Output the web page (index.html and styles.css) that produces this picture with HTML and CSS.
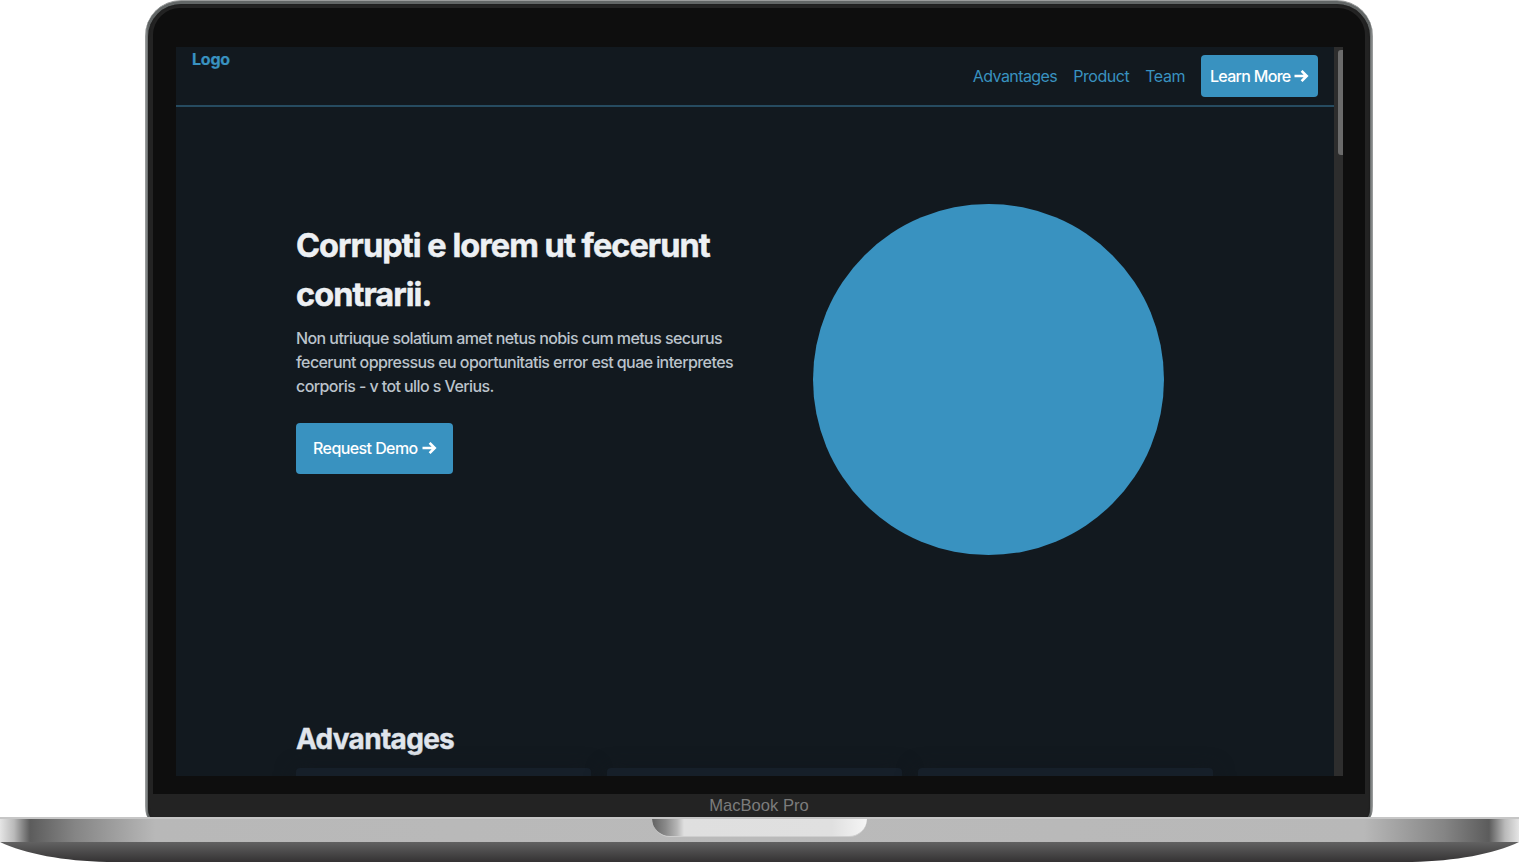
FILE: index.html
```
<!DOCTYPE html>
<html lang="en">
<head>
<meta charset="utf-8">
<title>MacBook Pro</title>
<link rel="stylesheet" href="styles.css">
</head>
<body>
<div class="laptop">
  <div class="lid">
    <div class="shell">
      <div class="bezel">
        <div class="screen">
          <div class="page">
            <header class="header">
              <a class="logo">Logo</a>
              <nav class="nav">
                <a class="link-advantages">Advantages</a>
                <a class="link-product">Product</a>
                <a class="link-team">Team</a>
                <a class="button button-small"><span>Learn More</span><svg class="arrow" viewBox="0 0 15 12"><path d="M0.5 6H12M7.6 0.9L12.7 6L7.6 11.1"/></svg></a>
              </nav>
            </header>
            <main class="content">
              <section class="hero">
                <div class="intro">
                  <h1>Corrupti e lorem ut fecerunt<br>contrarii.</h1>
                  <p>Non utriuque solatium amet netus nobis cum metus securus<br>fecerunt oppressus eu oportunitatis error est quae interpretes<br>corporis - v tot ullo s Verius.</p>
                  <a class="button button-large"><span>Request Demo</span><svg class="arrow" viewBox="0 0 15 12"><path d="M0.5 6H12M7.6 0.9L12.7 6L7.6 11.1"/></svg></a>
                </div>
                <div class="circle"></div>
              </section>
              <section class="advantages">
                <h2>Advantages</h2>
                <div class="cards"><div class="card"></div><div class="card"></div><div class="card"></div></div>
              </section>
            </main>
          </div>
          <div class="scrollbar"><div class="thumb"></div></div>
        </div>
      </div>
      <div class="chin">MacBook Pro</div>
    </div>
  </div>
  <div class="base">
    <div class="deck"><div class="notch"></div></div>
    <svg class="underside" viewBox="0 0 1519 20" preserveAspectRatio="none">
      <defs><linearGradient id="under" x1="0" y1="0" x2="0" y2="1"><stop offset="0" stop-color="#626262"/><stop offset="1" stop-color="#343233"/></linearGradient></defs>
      <path d="M0 0H1519C1494 12 1455 19 1412 20H107C64 19 25 12 0 0Z" fill="url(#under)"/>
    </svg>
  </div>
</div>
</body>
</html>
```
FILE: styles.css
```
* { box-sizing: border-box; }
body { margin: 0; background: #fff; overflow: hidden; font-family: Inter, "Liberation Sans", sans-serif; }
h1, h2, p { margin: 0; }
.laptop { width: 1519px; height: 862px; display: flex; flex-direction: column; align-items: center; }
.lid { width: 1228px; height: 818px; margin-right: 1px; padding: 3px 3px 0; border-radius: 36px 36px 4px 4px / 36px 36px 12px 12px; background: linear-gradient(90deg, #a3a5a5 0, #626666 3px, #626666 calc(100% - 3px), #a3a5a5 100%); border-top: 1px solid #9a9c9c; flex: none; }
.shell { height: 814px; padding: 4px 5px 0; border-radius: 33px 33px 4px 4px / 33px 33px 10px 10px; background: #232323; box-shadow: inset 0 0 2px #181818; display: flex; flex-direction: column; }
.bezel { height: 786px; flex: none; padding: 39px 22px 18px 23px; border-radius: 27px 27px 0 0; background: #0e0e0e; }
.screen { height: 729px; width: 1167px; display: flex; overflow: hidden; background: #12191f; }
.page { width: 1158px; flex: none; overflow: hidden; }
.header { height: 60px; padding: 0 16px; display: flex; justify-content: space-between; align-items: flex-start; border-bottom: 2px solid #264b60; color: #3992c0; }
.logo { font-size: 16px; line-height: 24px; font-weight: 700; letter-spacing: -.2px; -webkit-text-stroke: .2px currentColor; }
.nav { display: flex; align-items: center; gap: 16px; padding-top: 8px; font-size: 16px; line-height: 24px; letter-spacing: -.45px; }
.link-advantages { letter-spacing: -.58px; }
.button { display: flex; align-items: center; justify-content: space-between; border-radius: 4px; background: #3992c0; color: #fff; line-height: 24px; letter-spacing: -.58px; font-weight: 500; }
.button-small { width: 117px; height: 42px; padding: 0 9px; letter-spacing: -.7px; }
.button-large { width: 157px; height: 51px; padding: 0 16px 1px 17px; margin-top: 25px; }
.arrow { width: 15px; height: 12px; fill: none; stroke: #fff; stroke-width: 2.6; }
.content { padding: 97px 120px 0; }
.hero { display: flex; justify-content: space-between; height: 507px; }
.intro { padding-top: 17px; }
.intro h1 { font-size: 32.5px; line-height: 49px; letter-spacing: -.95px; font-weight: 750; -webkit-text-stroke: .5px currentColor; color: #edf0f3; white-space: nowrap; }
.intro p { margin-top: 7px; font-size: 16px; line-height: 24px; letter-spacing: -.58px; font-weight: 450; color: #bbc3cb; white-space: nowrap; }
.circle { width: 351px; height: 351px; margin-right: 50px; border-radius: 50%; background: #3992c0; }
.advantages h2 { font-size: 28px; line-height: 42px; letter-spacing: -.7px; font-weight: 750; -webkit-text-stroke: .4px currentColor; padding-top: 7px; color: #e0e5ec; }
.cards { display: grid; grid-template-columns: repeat(3, 295px); gap: 16px; margin-top: 8px; }
.card { height: 200px; border-radius: 4px; background: #161f29; box-shadow: 0 2px 20px #13181e; }
.scrollbar { width: 9px; padding: 3px 0 0 4px; background: #2d2d2d; }
.thumb { width: 5px; height: 105px; border-radius: 3px 0 0 3px; background: #6b6b6b; }
.chin { height: 24px; text-align: center; font: 16.6px/24px "Liberation Sans", Arial, sans-serif; color: #7c7c7c; }
.base { width: 1519px; height: 45px; margin-top: -1px; position: relative; }
.deck { height: 25px; border-top: 2px solid #c6c6c6; display: flex; justify-content: center; background: linear-gradient(90deg, #e5e5e5 0, #bababa 14px, #8a8a8a 22px, #5c5c5c 30px, #858585 75px, #b8b8b8 155px, #bababa 50%, #b8b8b8 calc(100% - 155px), #858585 calc(100% - 75px), #5c5c5c calc(100% - 30px), #8a8a8a calc(100% - 22px), #bababa calc(100% - 14px), #e5e5e5 100%); }
.notch { width: 215px; height: 18px; border-radius: 0 0 20px 20px; background: linear-gradient(90deg, #626262 0, #8b8b8b 14px, #b5b5b5 25px, #dfdfdf 32px, #e0e0e0 180px, #f5f5f5 100%); border-bottom: 1px solid #cecece; }
.underside { display: block; width: 1519px; height: 20px; }
```
